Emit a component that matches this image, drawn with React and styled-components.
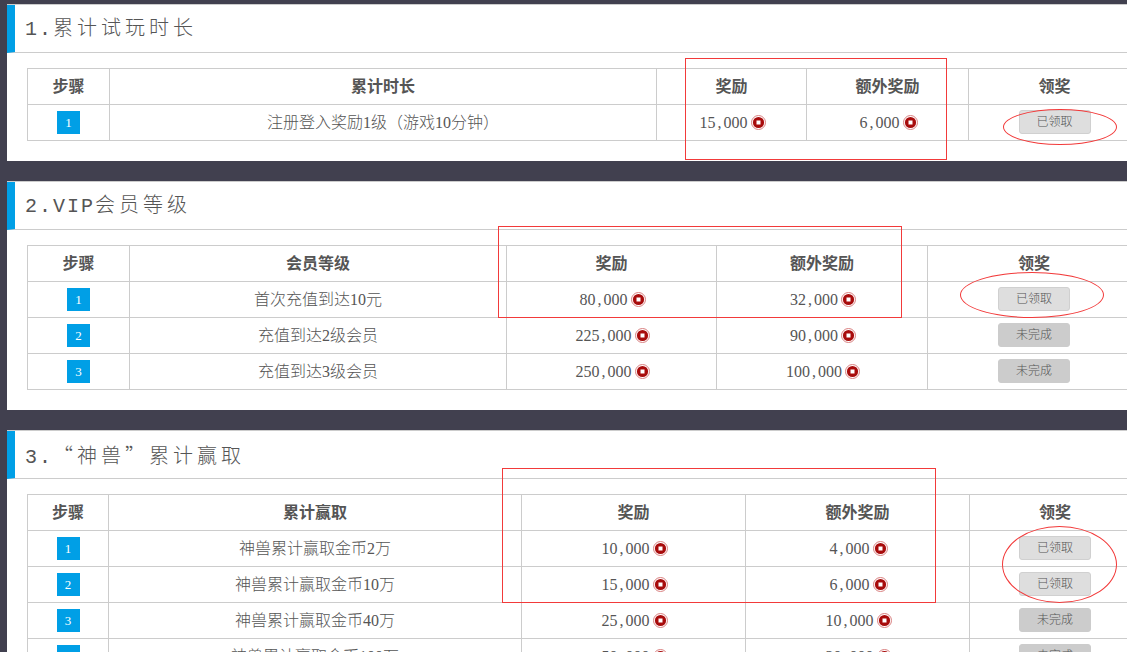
import React from 'react';
import styled, {createGlobalStyle} from 'styled-components';

const CJK = `"Liberation Serif", "Noto Sans CJK SC", serif`;

const Global = createGlobalStyle`
  html, body {
    margin: 0;
    height: 652px;
    overflow: hidden;
    background: #41404f;
  }
`;

const Page = styled.div`
  position: relative;
  width: 1127px;
  height: 652px;
  overflow: hidden;
  box-sizing: border-box;
  padding: 4px 0 0 7px;
  display: flex;
  flex-direction: column;
  gap: 20px;
  font-family: ${CJK};
  font-weight: 300;
  color: #555;
`;

const Panel = styled.section`
  background: #fff;
  border-top: 1px solid #ccc;
  width: 1200px;
  padding-bottom: 20px;
  flex: none;
`;

const Title = styled.h2`
  margin: 0 0 15px;
  height: 47px;
  border-bottom: 1px solid #ccc;
  border-left: 8px solid #009fe6;
  padding-left: 10px;
  font-size: 20px;
  font-weight: 300;
  letter-spacing: 4px;
  line-height: 47px;
  color: #555;
`;

const Latin = styled.span`
  font-family: "Liberation Mono", monospace;
  letter-spacing: 2px;
`;

const Quote = styled.span`
  font-family: "Noto Sans CJK SC", serif;
`;

const Table = styled.table`
  width: 1113px;
  margin-left: 20px;
  table-layout: fixed;
  border-collapse: collapse;
  font-size: 16px;
`;

const Th = styled.th`
  height: 31px;
  padding: 0 0 4px;
  border: 1px solid #ccc;
  font-weight: 700;
  color: #555;
  text-align: center;
`;

const Td = styled.td`
  height: ${p => p.$plain ? 31 : 35}px;
  padding: 0 0 ${p => p.$plain ? 4 : 0}px;
  border: 1px solid #ccc;
  text-align: center;
`;

const Step = styled.div`
  display: flex;
  align-items: center;
  justify-content: center;
  width: 23px;
  height: 23px;
  margin: 0 auto;
  background: #009fe6;
  color: #fff;
  font-size: 13px;
`;

const Reward = styled.div`
  display: flex;
  align-items: center;
  justify-content: center;
  gap: 3px;
  padding-left: 2px;
  line-height: 15px;
`;

const Comma = styled.span`
  display: inline-block;
  width: 8px;
`;

const ClaimButton = styled.div`
  display: flex;
  align-items: center;
  justify-content: center;
  box-sizing: border-box;
  width: 72px;
  height: 24px;
  margin: -1px auto 0;
  border-radius: 3px;
  border: 1px solid ${p => p.$done ? '#d0d0d0' : '#ccc'};
  background: ${p => p.$done ? '#dedede' : '#ccc'};
  color: #555;
  font-size: 12px;
  line-height: 20px;
`;

const Box = styled.div`
  position: absolute;
  box-sizing: border-box;
  left: ${p => p.$x}px;
  top: ${p => p.$y}px;
  width: ${p => p.$w}px;
  height: ${p => p.$h}px;
  border: 1px solid #f23a3a;
  border-radius: ${p => p.$round ? '50%' : '0'};
  pointer-events: none;
`;

function Coin(){
    return <svg width="15" height="15" viewBox="0 0 15 15">
        <circle cx="7.5" cy="7.5" r="7" fill="#fff" stroke="#d98080" strokeWidth="1"/>
        <circle cx="7.5" cy="7.5" r="5.6" fill="#a80b0b"/>
        <rect x="5.5" y="5.5" width="4" height="4" fill="#fff"/>
    </svg>;
}

function Amount({value}){
    const [head, tail] = value.split(',');
    return <Reward><span>{head}<Comma>,</Comma>{tail}</span><Coin/></Reward>;
}

function Rows({rows}){
    return rows.map(([text, reward, extra, done], i) => <tr key={i}>
        <Td><Step>{i + 1}</Step></Td>
        <Td $plain>{text}</Td>
        <Td><Amount value={reward}/></Td>
        <Td><Amount value={extra}/></Td>
        <Td><ClaimButton $done={done}>{done ? '已领取' : '未完成'}</ClaimButton></Td>
    </tr>);
}

function RewardTable({cols, heading, rows}){
    return <Table>
        <colgroup>{cols.map((w, i) => <col key={i} width={w}/>)}</colgroup>
        <thead>
            <tr>
                <Th>步骤</Th><Th>{heading}</Th><Th>奖励</Th><Th>额外奖励</Th><Th>领奖</Th>
            </tr>
        </thead>
        <tbody><Rows rows={rows}/></tbody>
    </Table>;
}

export default function App(){
    return <Page>
        <Global/>
        <Panel>
            <Title><Latin>1.</Latin>累计试玩时长</Title>
            <RewardTable
                cols={[82, 547, 150, 162, 172]}
                heading="累计时长"
                rows={[['注册登入奖励1级（游戏10分钟）', '15,000', '6,000', true]]}
            />
        </Panel>
        <Panel>
            <Title><Latin>2.VIP</Latin>会员等级</Title>
            <RewardTable
                cols={[102, 377, 210, 211, 213]}
                heading="会员等级"
                rows={[
                    ['首次充值到达10元', '80,000', '32,000', true],
                    ['充值到达2级会员', '225,000', '90,000', false],
                    ['充值到达3级会员', '250,000', '100,000', false],
                ]}
            />
        </Panel>
        <Panel>
            <Title><Latin>3.</Latin><Quote>“</Quote>神兽<Quote>”</Quote>累计赢取</Title>
            <RewardTable
                cols={[81, 413, 224, 224, 171]}
                heading="累计赢取"
                rows={[
                    ['神兽累计赢取金币2万', '10,000', '4,000', true],
                    ['神兽累计赢取金币10万', '15,000', '6,000', true],
                    ['神兽累计赢取金币40万', '25,000', '10,000', false],
                    ['神兽累计赢取金币100万', '50,000', '20,000', false],
                ]}
            />
        </Panel>
        <Box $x={685} $y={58} $w={262} $h={102}/>
        <Box $x={498} $y={226} $w={404} $h={92}/>
        <Box $x={502} $y={468} $w={434} $h={135}/>
        <Box $round $x={1003} $y={109} $w={114} $h={36}/>
        <Box $round $x={960} $y={272} $w={144} $h={46}/>
        <Box $round $x={1002} $y={526} $w={115} $h={77}/>
    </Page>;
}
